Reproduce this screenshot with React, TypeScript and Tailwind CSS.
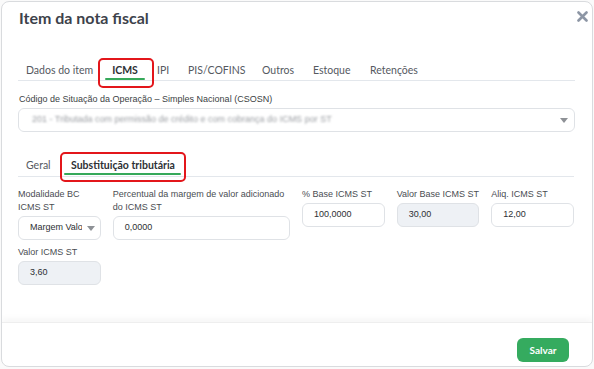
import React from "react";

const label = "text-[9px] leading-[13px] text-[#4a4d52] whitespace-nowrap";
const inputBase = "h-[24px] rounded-[6px] border border-[#dfe2e6] flex items-center pl-[11px] text-[9px] text-[#2d2f33]";

function Field({ title, value, disabled, span, select }: { title: React.ReactNode; value: string; disabled?: boolean; span: string; select?: boolean }) {
  return (
    <div className={`${span} flex flex-col gap-[2px]`}>
      <div className={label}>{title}</div>
      {select ? (
        <div className={`${inputBase} bg-white pr-[4px] justify-between`}>
          <span className="whitespace-nowrap overflow-hidden w-[52px]">Margem Valor Agregado (%)</span>
          <svg width="8" height="5" viewBox="0 0 8 5" className="shrink-0 mr-[1px]"><path d="M0 0h8L4 5z" fill="#8e9196" /></svg>
        </div>
      ) : (
        <div className={`${inputBase} ${disabled ? "bg-[#eef1f5]" : "bg-white"}`}>{value}</div>
      )}
    </div>
  );
}

export default function App() {
  const tabFont = { fontFamily: "Lato, sans-serif" };
  return (
    <div className="w-[594px] h-[369px] bg-[#fafafa] p-[1px]" style={{ fontFamily: "'Liberation Sans', Arial, sans-serif" }}>
      <div className="w-[592px] h-[366px] bg-white border border-[#d9dbde] rounded-[8px] flex flex-col overflow-hidden">
        <div className="flex-1 px-[16px] pt-[6px] relative">
          <div className="h-[20px] text-[16px] font-bold text-[#3d424b] leading-[20px] pl-[1px]" style={tabFont}>Item da nota fiscal</div>
          <svg className="absolute right-[4px] top-[9px]" width="11" height="11" viewBox="0 0 11 11"><path d="M1.5 1.5l8 8M9.5 1.5l-8 8" stroke="#8d96a5" strokeWidth="2.6" strokeLinecap="round" /></svg>

          <div className="mt-[28px] flex items-center border-b border-[#e3e7ec] h-[25px] pt-[5px] mr-[1px] text-[10.5px] text-[#55595f]" style={tabFont}>
            <div className="pl-[8px] w-[80px] shrink-0">Dados do item</div>
            <div className="relative w-[55px] shrink-0 h-full flex items-center justify-center">
              <span className="font-bold text-[#2e3135] pr-[1px]">ICMS</span>
              <div className="absolute left-[7px] w-[40px] top-[17px] h-[2px] bg-[#36a95a] rounded" />
              <div className="absolute left-0 w-[56px] -top-[3px] h-[30px] border-2 border-[#e3161b] rounded-[5px]" />
            </div>
            <div className="pl-[4px] w-[35px] shrink-0">IPI</div>
            <div className="w-[74px] shrink-0">PIS/COFINS</div>
            <div className="w-[51px] shrink-0">Outros</div>
            <div className="w-[57px] shrink-0">Estoque</div>
            <div>Retenções</div>
          </div>

          <div className="mt-[12px] h-[12px] leading-[12px] text-[9px] text-[#3c3f44] pl-[1px]">Código de Situação da Operação – Simples Nacional (CSOSN)</div>
          <div className="mt-[3px] h-[24px] mr-[1px] rounded-[6px] border border-[#dfe2e6] flex items-center justify-between pl-[13px] pr-[6px]">
            <span className="text-[9px] text-[#9a9da2] blur-[1.2px] whitespace-nowrap">201 - Tributada com permissão de crédito e com cobrança do ICMS por ST</span>
            <svg width="8" height="5" viewBox="0 0 8 5"><path d="M0 0h8L4 5z" fill="#8e9196" /></svg>
          </div>

          <div className="mt-[20px] flex items-center border-b border-[#e3e7ec] h-[25px] pt-[4px] mr-[2px] text-[10.5px] text-[#55595f]" style={tabFont}>
            <div className="pl-[8px] w-[42px] shrink-0">Geral</div>
            <div className="relative w-[126px] shrink-0 h-full flex items-center justify-center">
              <span className="font-bold text-[#2e3135]">Substituição tributária</span>
              <div className="absolute left-[4px] w-[117px] top-[17px] h-[2px] bg-[#36a95a] rounded" />
              <div className="absolute left-0 w-[126px] -top-[4px] h-[30px] border-2 border-[#e3161b] rounded-[5px]" />
            </div>
          </div>

          <div className="mt-[11px] grid grid-cols-12 gap-x-[12px] gap-y-[6px] mr-[2px] items-start">
            <Field span="col-span-2" title={<>Modalidade BC<br />ICMS ST</>} value="" select />
            <Field span="col-span-4" title={<>Percentual da margem de valor adicionado<br />do ICMS ST</>} value="0,0000" />
            <Field span="col-span-2" title="% Base ICMS ST" value="100,0000" />
            <Field span="col-span-2" title="Valor Base ICMS ST" value="30,00" disabled />
            <Field span="col-span-2" title="Aliq. ICMS ST" value="12,00" />
            <Field span="col-span-2" title="Valor ICMS ST" value="3,60" disabled />
          </div>
        </div>
        <div className="h-[44px] shrink-0 border-t border-[#eeeeee] shadow-[0_-4px_6px_rgba(0,0,0,0.035)] flex items-end justify-end pr-[23px] pb-[4px]">
          <button className="h-[24px] w-[52px] rounded-[6px] bg-[#35ab5f] text-white text-[10px] font-bold" style={tabFont}>Salvar</button>
        </div>
      </div>
    </div>
  );
}
